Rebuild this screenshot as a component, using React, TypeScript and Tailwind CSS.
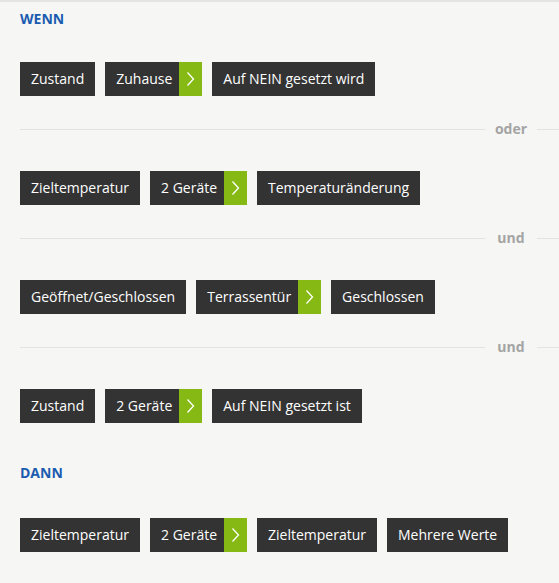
import React from "react";

type ChipDef = { text: string; arrow?: boolean };

const Chip = ({ text, arrow }: ChipDef) => (
  <div className="flex h-[34px] bg-[#333333] text-white">
    <div
      className={
        arrow
          ? "flex items-center pl-[11px] pr-[7px] text-[14px] leading-none"
          : "flex items-center px-[11px] text-[14px] leading-none"
      }
    >
      {text}
    </div>
    {arrow && (
      <div className="flex w-[23px] items-center justify-center bg-[#86b914]">
        <svg width="9" height="16" viewBox="0 0 9 16" fill="none">
          <path d="M1.5 1.5 L7.5 8 L1.5 14.5" stroke="white" strokeWidth="1.3" />
        </svg>
      </div>
    )}
  </div>
);

const Row = ({ chips }: { chips: ChipDef[] }) => (
  <div className="flex gap-[10px] pl-[20px]">
    {chips.map((c, i) => (
      <Chip key={i} {...c} />
    ))}
  </div>
);

const Divider = ({ label }: { label: string }) => (
  <div className="mt-[23px] mb-[32px] flex h-[20px] items-center pl-[20px]">
    <div className="h-px flex-1 bg-[#e3e3e1]" />
    <div className="w-[52px] text-center text-[14px] font-bold leading-none text-[#a4a4a4]">{label}</div>
    <div className="h-px w-[22px] bg-[#e3e3e1]" />
  </div>
);

export default function App() {
  return (
    <div
      className="h-[583px] w-[559px] overflow-hidden border-t-2 border-[#e4e4e2] bg-[#f6f6f4]"
      style={{ fontFamily: '"Open Sans", sans-serif' }}
    >
      <div className="pl-[20px] pt-[8px] text-[14px] font-bold leading-[18px] text-[#1b5cb0]">WENN</div>
      <div className="mt-[34px]">
        <Row chips={[{ text: "Zustand" }, { text: "Zuhause", arrow: true }, { text: "Auf NEIN gesetzt wird" }]} />
      </div>
      <Divider label="oder" />
      <Row chips={[{ text: "Zieltemperatur" }, { text: "2 Geräte", arrow: true }, { text: "Temperaturänderung" }]} />
      <Divider label="und" />
      <Row chips={[{ text: "Geöffnet/Geschlossen" }, { text: "Terrassentür", arrow: true }, { text: "Geschlossen" }]} />
      <Divider label="und" />
      <Row chips={[{ text: "Zustand" }, { text: "2 Geräte", arrow: true }, { text: "Auf NEIN gesetzt ist" }]} />
      <div className="mt-[41px] pl-[20px] text-[14px] font-bold leading-[18px] text-[#1b5cb0]">DANN</div>
      <div className="mt-[36px]">
        <Row
          chips={[
            { text: "Zieltemperatur" },
            { text: "2 Geräte", arrow: true },
            { text: "Zieltemperatur" },
            { text: "Mehrere Werte" },
          ]}
        />
      </div>
    </div>
  );
}
